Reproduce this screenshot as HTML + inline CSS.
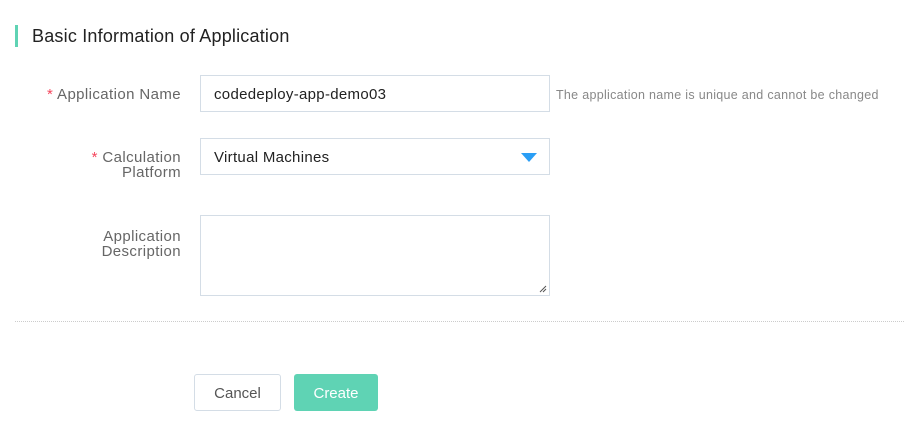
<!DOCTYPE html>
<html><head><meta charset="utf-8"><style>
*{box-sizing:border-box;margin:0;padding:0}
body{width:904px;height:427px;background:#fff;font-family:"Liberation Sans",sans-serif;position:relative;overflow:hidden}
.abs{position:absolute}
.title{left:15px;top:25px;height:22px;border-left:3px solid #5fd3b4;padding-left:14px;font-size:18px;color:#222;line-height:22px;letter-spacing:0.2px}
.lbl{font-size:15px;color:#666;text-align:right;width:181px;left:0;line-height:15px;letter-spacing:0.4px}
.lbl b{color:#f5465d;font-weight:normal}
.box{border:1px solid #d4dde6;background:#fff;font-size:15px;color:#222;padding-left:13px;letter-spacing:0.3px}
.hint{font-size:12.5px;color:#888;letter-spacing:0.3px}
.btn{border-radius:3px;font-size:15px;text-align:center;height:37px}
</style></head><body>
<div class="abs title">Basic Information of Application</div>
<div class="abs lbl" style="top:87px"><b>*</b> Application Name</div>
<div class="abs box" style="left:200px;top:75px;width:350px;height:37px;line-height:38px">codedeploy-app-demo03</div>
<div class="abs hint" style="left:556px;top:88px">The application name is unique and cannot be changed</div>
<div class="abs lbl" style="top:150px"><b>*</b> Calculation<br>Platform</div>
<div class="abs box" style="left:200px;top:138px;width:350px;height:37px;line-height:38px">Virtual Machines
<svg class="abs" style="left:320px;top:14px" width="16" height="9"><path d="M0 0H16L8 9Z" fill="#2a9ef5"/></svg></div>
<div class="abs lbl" style="top:229px">Application<br>Description</div>
<div class="abs box" style="left:200px;top:215px;width:350px;height:81px">
<svg class="abs" style="right:2px;bottom:2px" width="8" height="8"><path d="M1 7L7 1M4 7L7 4" stroke="#555" stroke-width="1"/></svg></div>
<div class="abs" style="left:15px;top:321px;width:889px;border-top:1px dotted #ccc"></div>
<div class="abs btn" style="left:194px;top:374px;width:87px;border:1px solid #d4dde6;color:#555;line-height:37px">Cancel</div>
<div class="abs btn" style="left:294px;top:374px;width:84px;background:#5fd3b4;color:#fff;line-height:39px">Create</div>
</body></html>
